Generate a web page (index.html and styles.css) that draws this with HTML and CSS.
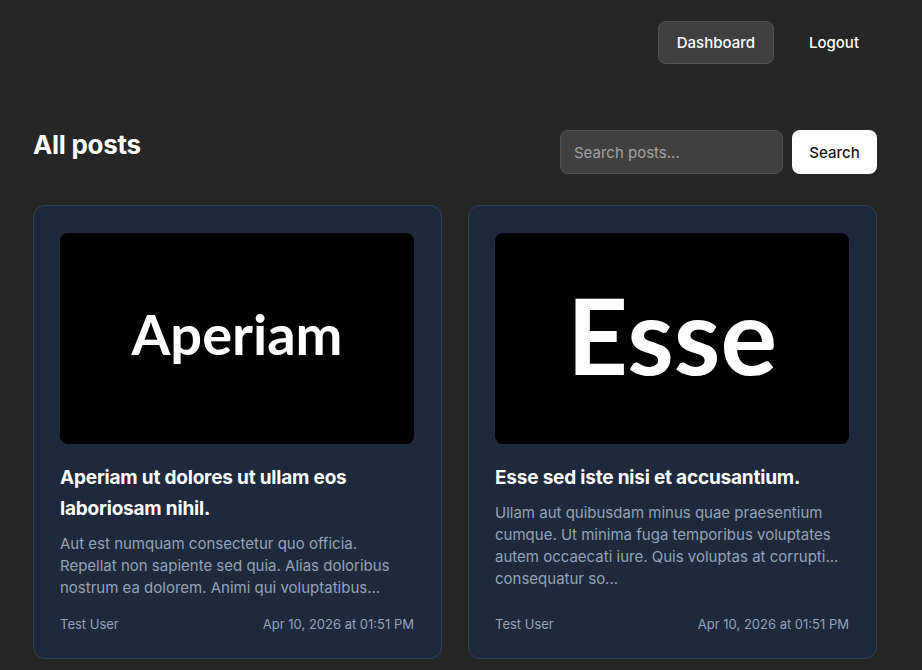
FILE: index.html
```html
<!DOCTYPE html>
<html lang="en">
<head>
  <meta charset="UTF-8" />
  <meta name="viewport" content="width=device-width, initial-scale=1.0"/>
  <title>All posts</title>
  <link rel="stylesheet" href="styles.css">
</head>
<body>
  <nav class="topbar">
    <a class="nav-link active" href="#">Dashboard</a>
    <a class="nav-link" href="#">Logout</a>
  </nav>

  <main class="container">
    <div class="header">
      <h1>All posts</h1>
      <form class="search">
        <input type="text" placeholder="Search posts...">
        <button type="button">Search</button>
      </form>
    </div>

    <div class="posts">
      <article class="card">
        <div class="thumb"><span class="thumb-word small">Aperiam</span></div>
        <h2>Aperiam ut dolores ut ullam eos laboriosam nihil.</h2>
        <p class="excerpt">Aut est numquam consectetur quo officia. Repellat non sapiente sed quia. Alias doloribus nostrum ea dolorem. Animi qui voluptatibus...</p>
        <div class="meta">
          <span>Test User</span>
          <span>Apr 10, 2026 at 01:51 PM</span>
        </div>
      </article>

      <article class="card">
        <div class="thumb"><span class="thumb-word big">Esse</span></div>
        <h2>Esse sed iste nisi et accusantium.</h2>
        <p class="excerpt">Ullam aut quibusdam minus quae praesentium cumque. Ut minima fuga temporibus voluptates autem occaecati iure. Quis voluptas at corrupti... consequatur so...</p>
        <div class="meta">
          <span>Test User</span>
          <span>Apr 10, 2026 at 01:51 PM</span>
        </div>
      </article>
    </div>
  </main>
</body>
</html>
```

FILE: styles.css
```css
body {
  font-family: Inter, "Noto Sans", sans-serif;
  background: #262626;
  color: #fff;
  margin: 0;
}

.topbar {
  display: flex;
  justify-content: flex-end;
  align-items: center;
  gap: 16px;
  padding: 21px 44px 0 0;
}

.nav-link {
  color: #fff;
  text-decoration: none;
  font-size: 15px;
  font-weight: 500;
  padding: 11px 18px;
  border-radius: 8px;
  border: 1px solid transparent;
  line-height: 19px;
}

.nav-link.active {
  background: #404040;
  border-color: #525252;
}

.container {
  padding: 0 45px 0 33px;
}

.header {
  display: flex;
  justify-content: space-between;
  align-items: flex-start;
  margin-top: 66px;
  margin-bottom: 31px;
}

h1 {
  font-size: 26px;
  font-weight: 700;
  margin: 0;
  line-height: 28px;
  padding-top: 1px;
  letter-spacing: -0.3px;
}

.search {
  display: flex;
  gap: 9px;
}

.search input {
  width: 223px;
  height: 44px;
  box-sizing: border-box;
  background: #404040;
  border: 1px solid #525252;
  border-radius: 8px;
  color: #fff;
  font-family: inherit;
  font-size: 15px;
  padding: 0 13px;
}

.search input::placeholder {
  color: #a3a3a3;
}

.search button {
  height: 44px;
  width: 85px;
  background: #fff;
  color: #171717;
  border: none;
  border-radius: 8px;
  font-family: inherit;
  font-size: 15px;
  font-weight: 500;
}

.posts {
  display: grid;
  grid-template-columns: 1fr 1fr;
  gap: 26px;
}

.card {
  background: #1e293b;
  border: 1px solid #334155;
  border-radius: 12px;
  padding: 27px 27px 26px 26px;
  display: flex;
  flex-direction: column;
  height: 454px;
  box-sizing: border-box;
}

.thumb {
  background: #000;
  border-radius: 8px;
  height: 211px;
  padding-bottom: 10px;
  box-sizing: border-box;
  display: flex;
  align-items: center;
  justify-content: center;
}

.thumb-word {
  font-family: Lato, sans-serif;
  font-weight: 700;
  color: #fff;
}

.thumb-word.small {
  font-size: 56px;
}

.thumb-word.big {
  font-size: 106px;
}

.card h2 {
  font-size: 19px;
  font-weight: 700;
  line-height: 31px;
  margin: 18px 0 0;
  letter-spacing: -0.2px;
}

.excerpt {
  color: #94a3b8;
  font-size: 15px;
  line-height: 22px;
  margin: 9px 0 0;
}

.meta {
  margin-top: auto;
  display: flex;
  justify-content: space-between;
  color: #94a3b8;
  font-size: 13px;
}
```
